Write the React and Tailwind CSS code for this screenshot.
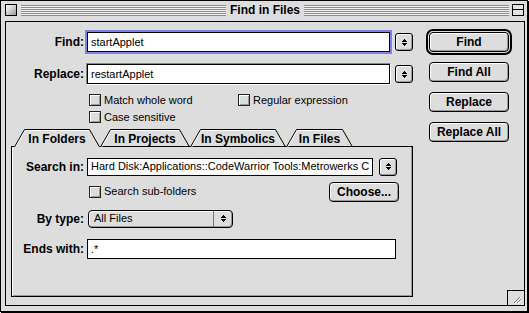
import React from "react";

const bevel = "shadow-[inset_1px_1px_0_#ffffff,inset_-1px_-1px_0_#999999]";

function UpDown() {
  return (
    <svg width="5" height="7" viewBox="0 0 5 7" shapeRendering="crispEdges" fill="#000">
      <rect x="2" y="0" width="1" height="1" />
      <rect x="1" y="1" width="3" height="1" />
      <rect x="0" y="2" width="5" height="1" />
      <rect x="0" y="4" width="5" height="1" />
      <rect x="1" y="5" width="3" height="1" />
      <rect x="2" y="6" width="1" height="1" />
    </svg>
  );
}

function Stepper() {
  return (
    <div className={`flex h-[18px] w-[18px] items-center justify-center rounded-[3px] border border-black bg-[#dddddd] ${bevel}`}>
      <UpDown />
    </div>
  );
}

function Button({ children, className = "" }) {
  return (
    <div className={`flex h-[20px] items-center justify-center rounded-[4px] border border-black bg-[#dddddd] text-[12px] font-bold leading-none ${bevel} ${className}`}>
      {children}
    </div>
  );
}

function Check({ label, className = "" }) {
  return (
    <div className={`flex items-center ${className}`}>
      <div className={`h-[12px] w-[12px] border border-[#222222] bg-[#dcdcdc] ${bevel}`} />
      <span className="ml-[3px] text-[11px] leading-none">{label}</span>
    </div>
  );
}

function Stripes() {
  return (
    <div className="h-[11px] flex-1 bg-[image:repeating-linear-gradient(to_bottom,#8c8c8c_0px,#8c8c8c_1px,#f2f2f2_1px,#f2f2f2_2px)]" />
  );
}

const tabs = [
  { label: "In Folders", w: 86, cls: "w-[86px]", front: true },
  { label: "In Projects", w: 90, cls: "w-[90px]" },
  { label: "In Symbolics", w: 96, cls: "w-[96px]" },
  { label: "In Files", w: 67, cls: "w-[67px]" }
];

function Tab({ label, w, cls, front }) {
  return (
    <div className={`relative flex h-[19px] items-center justify-center ${front ? "" : "border-b border-black"} ${cls}`}>
      <svg className="absolute left-0 top-0" width={w} height="19" viewBox={`0 0 ${w} 19`}>
        <path d={`M1.5 19 L11 2.5 L${w - 11} 2.5`} stroke="#ffffff" fill="none" />
        <path d={`M0.5 19 L10.5 1.5 L${w - 10.5} 1.5 L${w - 0.5} 19`} stroke="#000" fill="none" />
      </svg>
      <span className="relative pt-[3px] text-[12px] font-bold leading-none">{label}</span>
    </div>
  );
}

export default function App() {
  return (
    <div className="relative h-[313px] w-[529px] overflow-hidden bg-white font-['Liberation_Sans',Arial,sans-serif] text-black">
      <div className="flex h-[312px] w-[528px] flex-col border border-black bg-[#dddddd] shadow-[1px_1px_0_#000]">
        {/* title bar */}
        <div className="flex h-[20px] items-start px-[4px] pr-[3px] pt-[3px]">
          <div className="h-[12px] w-[12px] border border-black bg-[image:linear-gradient(135deg,#ffffff,#9a9a9a)]" />
          <div className="ml-[4px] mt-[1px] flex flex-1 items-center">
            <Stripes />
            <span className="px-[4px] text-[12px] font-bold leading-[11px]">Find in Files</span>
            <Stripes />
          </div>
          <div className="ml-[3px] flex h-[12px] w-[12px] flex-col border border-black bg-[#e4e4e4]">
            <div className="h-[5px] border-b border-black" />
          </div>
        </div>

        {/* content */}
        <div className="relative ml-[4px] mr-[2px] flex h-[285px] border border-black bg-[#dddddd]">
          <div className="flex w-[420px] flex-col">
            <div className="mt-[8px] flex h-[24px] items-center">
              <div className="w-[78px] text-right text-[12px] font-bold leading-none">Find:</div>
              <div className="ml-[1px] h-[24px] w-[307px] border-2 border-[#8080e6]">
                <div className="flex h-[20px] items-center border border-black bg-white pl-[3px] text-[11px] leading-none">startApplet</div>
              </div>
              <div className="ml-[3px]"><Stepper /></div>
            </div>

            <div className="mt-[8px] flex h-[24px] items-center">
              <div className="w-[78px] text-right text-[12px] font-bold leading-none">Replace:</div>
              <div className="ml-[2px] h-[22px] w-[305px] border border-b-white border-l-[#888888] border-r-white border-t-[#888888]">
                <div className="flex h-[20px] items-center border border-black bg-white pl-[3px] text-[11px] leading-none">restartApplet</div>
              </div>
              <div className="ml-[4px]"><Stepper /></div>
            </div>

            <div className="mt-[8px] flex h-[12px] items-center pl-[83px]">
              <Check label="Match whole word" className="w-[149px]" />
              <Check label="Regular expression" />
            </div>
            <div className="mt-[5px] flex h-[12px] items-center pl-[83px]">
              <Check label="Case sensitive" />
            </div>

            {/* tabs */}
            <div className="ml-[5px] mt-[5px] flex h-[19px] w-[402px]">
              <div className="h-[19px] w-[3px] border-b border-black" />
              {tabs.map((t) => (
                <Tab key={t.label} {...t} />
              ))}
              <div className="h-[19px] flex-1 border-b border-black" />
            </div>

            {/* panel */}
            <div className="ml-[5px] flex h-[150px] w-[402px] flex-col border-x border-b border-black shadow-[inset_1px_0_0_#ffffff,inset_-1px_-1px_0_#999999]">
              <div className="mt-[10px] flex h-[19px] items-center">
                <div className="w-[72px] text-right text-[12px] font-bold leading-none">Search in:</div>
                <div className="ml-[3px] flex h-[18px] w-[286px] items-center overflow-hidden whitespace-nowrap border border-black bg-white pl-[3px] text-[11px] leading-none">
                  Hard Disk:Applications::CodeWarrior Tools:Metrowerks C
                </div>
                <div className="ml-[6px]"><Stepper /></div>
              </div>

              <div className="mr-[13px] mt-[6px] flex h-[19px] items-center pl-[77px]">
                <Check label="Search sub-folders" />
                <Button className="ml-auto h-[19px] w-[70px]">Choose...</Button>
              </div>

              <div className="mt-[8px] flex h-[19px] items-center">
                <div className="w-[72px] text-right text-[12px] font-bold leading-none">By type:</div>
                <div className={`ml-[4px] flex h-[18px] w-[145px] items-center rounded-[4px] border border-black bg-[#dddddd] ${bevel}`}>
                  <span className="flex-1 pl-[5px] text-[11px] leading-none">All Files</span>
                  <div className="flex h-[16px] w-[19px] items-center justify-center border-l border-[#777777]">
                    <UpDown />
                  </div>
                </div>
              </div>

              <div className="mt-[11px] flex h-[20px] items-center">
                <div className="w-[72px] text-right text-[12px] font-bold leading-none">Ends with:</div>
                <div className="ml-[3px] flex h-[20px] w-[309px] items-center border border-black bg-white pl-[3px] text-[11px] leading-none">.*</div>
              </div>
            </div>
          </div>

          {/* buttons */}
          <div className="flex flex-col">
            <div className="mt-[7px] h-[26px] w-[86px] rounded-[7px] border-2 border-black p-[1px]">
              <Button className="w-[80px]">Find</Button>
            </div>
            <Button className="ml-[3px] mt-[7px] w-[80px]">Find All</Button>
            <Button className="ml-[3px] mt-[10px] w-[80px]">Replace</Button>
            <Button className="ml-[3px] mt-[10px] w-[80px]">Replace All</Button>
          </div>

          {/* grow box */}
          <div className="absolute bottom-0 right-0 h-[15px] w-[17px] border-l border-t border-black bg-[#dddddd]">
            <svg width="16" height="14" viewBox="0 0 16 14" className="absolute left-0 top-0">
              <path d="M6 12 L12 6 M9 12 L13 8" stroke="#777" />
              <path d="M7 12.8 L13 6.8 M10 12.8 L13.8 9" stroke="#fff" />
            </svg>
          </div>
        </div>
      </div>
    </div>
  );
}
